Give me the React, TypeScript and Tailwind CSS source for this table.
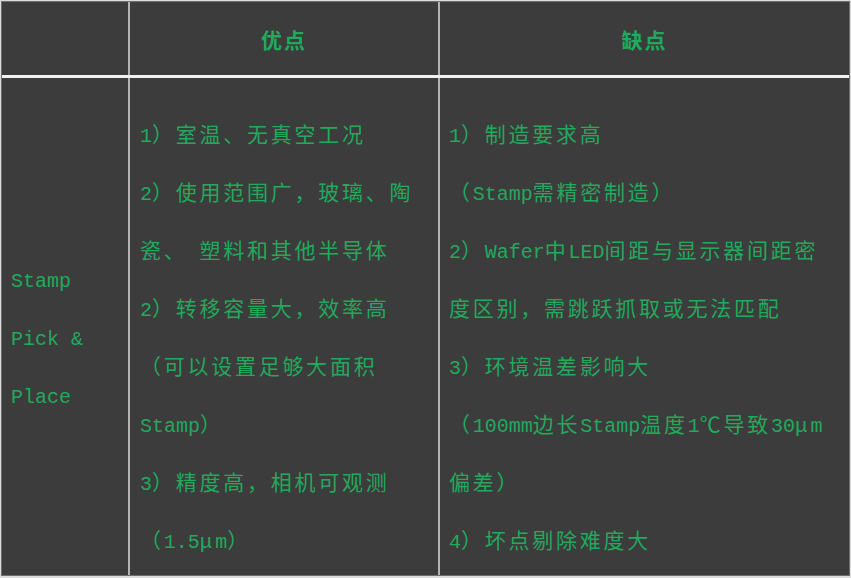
import React from "react";

const FONT = '"Liberation Mono", "Noto Sans CJK SC", monospace';

function Line({ text }: { text: string }) {
  const parts = text.split(/([\x20-\x7E]+)/).filter((p) => p.length > 0);
  return (
    <div className="h-[58px] flex items-center whitespace-nowrap">
      {parts.map((p, i) =>
        /^[\x20-\x7E]+$/.test(p) ? (
          <span key={i} className="tracking-normal whitespace-pre text-[20px]">
            {p}
          </span>
        ) : (
          <span key={i} className="tracking-[2.75px]">
            {p}
          </span>
        )
      )}
    </div>
  );
}

const pros = [
  "1）室温、无真空工况",
  "2）使用范围广，玻璃、陶",
  "瓷、 塑料和其他半导体",
  "2）转移容量大，效率高",
  "（可以设置足够大面积",
  "Stamp）",
  "3）精度高，相机可观测",
  "（1.5μm）",
];

const cons = [
  "1）制造要求高",
  "（Stamp需精密制造）",
  "2）Wafer中LED间距与显示器间距密",
  "度区别，需跳跃抓取或无法匹配",
  "3）环境温差影响大",
  "（100mm边长Stamp温度1℃导致30μm",
  "偏差）",
  "4）坏点剔除难度大",
];

export default function App() {
  return (
    <div
      className="w-[851px] h-[578px] bg-[#dcdcdc] p-[1px] overflow-hidden"
      style={{ fontFamily: FONT }}
    >
      <div className="w-[849px] h-[575px] bg-[#3c3c3c] border border-[#6e6e6e] flex flex-col text-[#22a95c] text-[21px]">
        {/* header */}
        <div className="flex h-[76px] shrink-0 border-b-[3px] border-[#f2f2f2]">
          <div className="w-[128px] border-r-2 border-[#b4b4b4]" />
          <div className="w-[310px] border-r-2 border-[#b4b4b4] flex items-center justify-center pt-[8px]">
            <span className="font-semibold tracking-[2px] text-[21px]">优点</span>
          </div>
          <div className="flex-1 flex items-center justify-center pt-[8px]">
            <span className="font-semibold tracking-[2px] text-[21px]">缺点</span>
          </div>
        </div>
        {/* body */}
        <div className="flex flex-1">
          <div className="w-[128px] border-r-2 border-[#b4b4b4] pl-[9px] pt-[175px]">
            <Line text="Stamp" />
            <Line text="Pick &" />
            <Line text="Place" />
          </div>
          <div className="w-[310px] border-r-2 border-[#b4b4b4] pl-[10px] pt-[30px]">
            {pros.map((t, i) => (
              <Line key={i} text={t} />
            ))}
          </div>
          <div className="flex-1 pl-[9px] pt-[30px]">
            {cons.map((t, i) => (
              <Line key={i} text={t} />
            ))}
          </div>
        </div>
      </div>
    </div>
  );
}
